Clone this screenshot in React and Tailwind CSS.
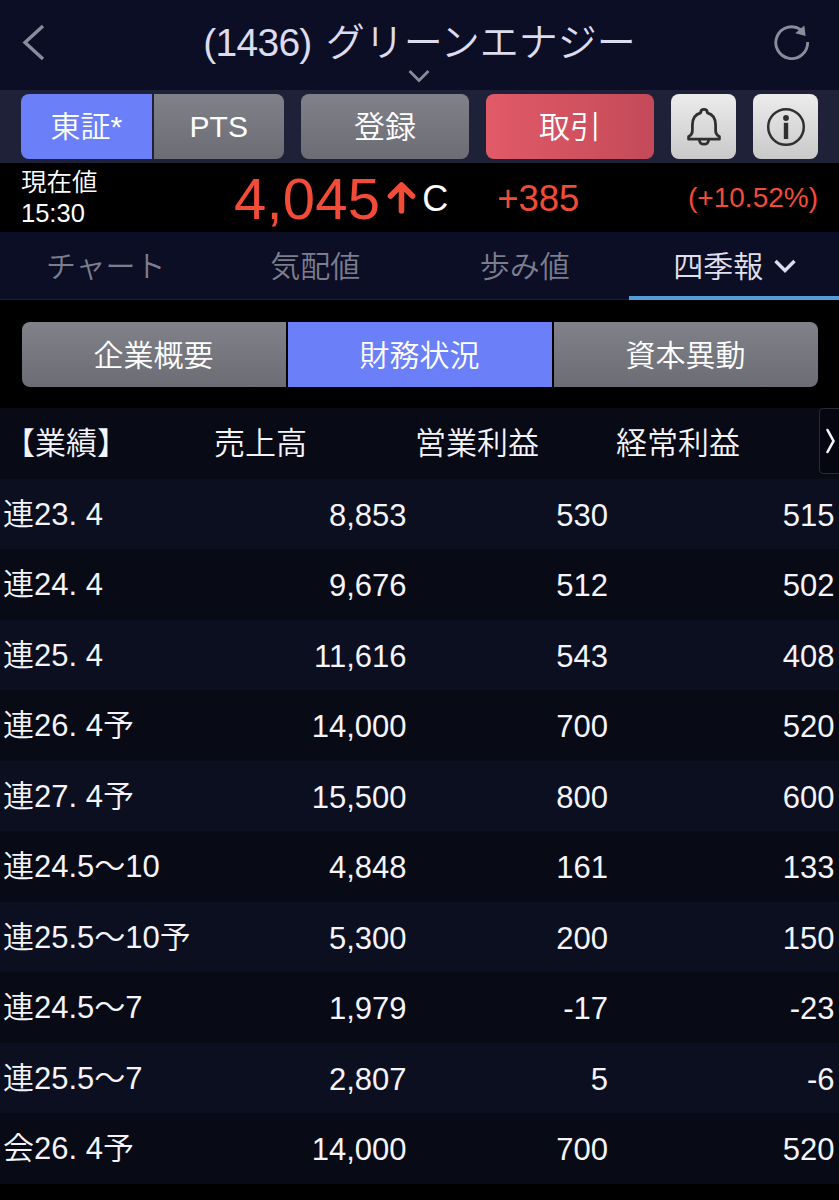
import React, { useState } from 'react';

const fontStack = "font-['Liberation_Sans','Noto_Sans_CJK_JP',sans-serif]";

const tabs = ['チャート', '気配値', '歩み値', '四季報'];
const sections = ['企業概要', '財務状況', '資本異動'];
const columns = ['【業績】', '売上高', '営業利益', '経常利益'];

const results = [
  { period: '連23. 4', sales: '8,853', operating: '530', ordinary: '515' },
  { period: '連24. 4', sales: '9,676', operating: '512', ordinary: '502' },
  { period: '連25. 4', sales: '11,616', operating: '543', ordinary: '408' },
  { period: '連26. 4予', sales: '14,000', operating: '700', ordinary: '520' },
  { period: '連27. 4予', sales: '15,500', operating: '800', ordinary: '600' },
  { period: '連24.5〜10', sales: '4,848', operating: '161', ordinary: '133' },
  { period: '連25.5〜10予', sales: '5,300', operating: '200', ordinary: '150' },
  { period: '連24.5〜7', sales: '1,979', operating: '-17', ordinary: '-23' },
  { period: '連25.5〜7', sales: '2,807', operating: '5', ordinary: '-6' },
  { period: '会26. 4予', sales: '14,000', operating: '700', ordinary: '520' }
];

const grayButton = 'bg-gradient-to-b from-[#818289] to-[#6c6d74]';
const lightButton = 'flex h-[65px] w-[65px] items-center justify-center rounded-lg bg-gradient-to-b from-[#ececec] to-[#c9c9ca]';
const rowGrid = 'grid h-[70.5px] grid-cols-[210px_201px_201px_1fr] items-center text-[31px] leading-none';

const Header = () => (
  <header className="flex h-[90px] items-start justify-between bg-[#0c0e26] px-[22px]">
    <button className="mt-6 w-[60px]">
      <svg width="24" height="38" viewBox="0 0 24 38" fill="none" stroke="#8b8b9b" strokeWidth="3.4">
        <path d="M21 2 L3 18.5 L21 35" />
      </svg>
    </button>
    <div className="flex flex-col items-center">
      <h1 className="mt-[15px] h-[55px] whitespace-nowrap text-[39px] leading-[56px] text-[#dcdcee]">
        <span className="mr-[4px] tracking-[-0.7px]">(1436) </span>グリーンエナジー
      </h1>
      <svg width="22" height="13" viewBox="0 0 22 13" fill="none" stroke="#8b8b9b" strokeWidth="2.8">
        <path d="M1.5 1 L11 10.5 L20.5 1" />
      </svg>
    </div>
    <button className="mt-6 flex w-[60px] justify-end pr-[7px]">
      <svg width="38" height="38" viewBox="0 0 38 38" fill="none">
        <path d="M35.6 18 A15.9 15.9 0 1 1 28.8 5.6" stroke="#8b8b9b" strokeWidth="2.9" />
        <path d="M32.3 1.5 L33.6 12 L23.2 9.2 Z" fill="#8b8b9b" />
      </svg>
    </button>
  </header>
);

const ActionBar = () => (
  <div className="flex h-[73px] bg-[#1f2138] pl-[21px] pt-1 text-[30px] text-white">
    <div className="flex h-[65px] w-[263px] gap-[2px] overflow-hidden rounded-lg">
      <button className="flex-1 bg-[#6b80f8]">東証*</button>
      <button className={`flex-1 ${grayButton}`}>PTS</button>
    </div>
    <button className={`ml-[17px] h-[65px] w-[168px] rounded-lg pt-[3px] text-[31px] ${grayButton}`}>登録</button>
    <button className="ml-[17px] h-[65px] w-[168px] rounded-lg bg-gradient-to-r from-[#e15a68] to-[#c44a59] pt-[3px] text-[31px]">取引</button>
    <button className={`ml-[17px] ${lightButton}`}>
      <svg width="36" height="40" viewBox="0 0 36 40" fill="none" stroke="#303033" strokeWidth="2.8" strokeLinejoin="round">
        <path d="M2.6 32.2 V29.6 C5 28.4 6.4 26.6 6.4 23.6 V18 C6.4 11.3 9.5 7.3 14.6 5.9 C14.6 1.2 21.4 1.2 21.4 5.9 C26.5 7.3 29.6 11.3 29.6 18 V23.6 C29.6 26.6 31 28.4 33.4 29.6 V32.2 Z" />
        <path d="M13.4 33 C13.8 38.6 22.2 38.6 22.6 33" />
      </svg>
    </button>
    <button className={`ml-[17px] ${lightButton}`}>
      <svg width="40" height="40" viewBox="0 0 40 40" fill="none">
        <circle cx="20" cy="20" r="17.8" stroke="#303033" strokeWidth="2.5" />
        <circle cx="20" cy="11" r="2.9" fill="#303033" />
        <path d="M20 15.8 V32" stroke="#303033" strokeWidth="4.4" />
      </svg>
    </button>
  </div>
);

const Price = () => (
  <div className="flex h-[69px] items-center bg-black px-[21px] text-[#f04c37]">
    <div className="w-[213px] text-[25.5px] leading-[31px] text-white">
      <div>現在値</div>
      <div>15:30</div>
    </div>
    <span className="pt-[2px] text-[58px] leading-[69px] tracking-[0.2px]">4,045</span>
    <svg className="ml-[7px]" width="29" height="34" viewBox="0 0 29 34" fill="none" stroke="#f04c37" strokeWidth="5.6" strokeLinecap="round" strokeLinejoin="round">
      <path d="M14.5 30 V5 M3.5 15 L14.5 4 L25.5 15" />
    </svg>
    <span className="ml-[6px] pt-[3px] text-[36px] text-white">C</span>
    <span className="ml-[49px] pt-[3px] text-[36.5px]">+385</span>
    <span className="ml-auto pt-px text-[28px]">(+10.52%)</span>
  </div>
);

const App = () => {
  const [tab, setTab] = useState('四季報');
  const [section, setSection] = useState('財務状況');

  return (
    <div className={`flex h-[1200px] w-[839px] flex-col overflow-hidden bg-black font-[350] ${fontStack}`}>
      <Header />
      <ActionBar />
      <Price />

      <nav className="grid h-[68px] grid-cols-[209.5px_209.5px_209.5px_1fr] bg-[#0c0e26] text-[30px]">
        {tabs.map((name) => (
          <button
            key={name}
            onClick={() => setTab(name)}
            className={`flex items-center justify-center pl-[2px] ${
              tab === name
                ? 'border-b-4 border-[#549ddc] pt-1 text-[#e0e0ee]'
                : 'border-b border-[#1d2035] pt-px text-[#7c7d8d]'
            }`}
          >
            {name}
            {name === '四季報' && (
              <svg className="ml-[11px]" width="22" height="15" viewBox="0 0 22 15" fill="none" stroke="#dcdcee" strokeWidth="3.4">
                <path d="M1.5 2 L11 11.5 L20.5 2" />
              </svg>
            )}
          </button>
        ))}
      </nav>

      <div className="mx-[21.5px] mt-[22px] flex h-[65px] shrink-0 gap-[2px] overflow-hidden rounded-lg text-[30px] text-white">
        {sections.map((name) => (
          <button
            key={name}
            onClick={() => setSection(name)}
            className={`flex-1 pt-px ${section === name ? 'bg-[#6b80f8]' : grayButton}`}
          >
            {name}
          </button>
        ))}
      </div>

      <div className="relative mt-[21px] text-[#f4f4fa]">
        <div className={`${rowGrid} bg-[#080a16] pt-px`}>
          {columns.map((name) => (
            <span key={name} className="whitespace-nowrap pl-[4px]">{name}</span>
          ))}
        </div>
        {results.map((row, i) => (
          <div key={row.period + row.sales} className={`${rowGrid} pt-px ${i % 2 === 0 ? 'bg-[#0c0f20]' : 'bg-[#080a16]'}`}>
            <span className="whitespace-nowrap pl-[3px]">{row.period}</span>
            <span className="pr-[4.5px] pt-[2px] text-right">{row.sales}</span>
            <span className="pr-[4px] pt-[2px] text-right">{row.operating}</span>
            <span className="pr-[4.5px] pt-[2px] text-right">{row.ordinary}</span>
          </div>
        ))}
        {/* scroll hint for the remaining columns */}
        <div className="absolute -right-px top-0 flex h-[66px] w-[21px] items-center justify-center rounded-l border border-[#2a2b35] bg-[#05060f]">
          <svg width="10" height="26" viewBox="0 0 10 26" fill="none" stroke="#f4f4fa" strokeWidth="2.6" strokeLinecap="round">
            <path d="M2.5 2 L8.5 13 L2.5 24" />
          </svg>
        </div>
      </div>
    </div>
  );
};

export default App;
